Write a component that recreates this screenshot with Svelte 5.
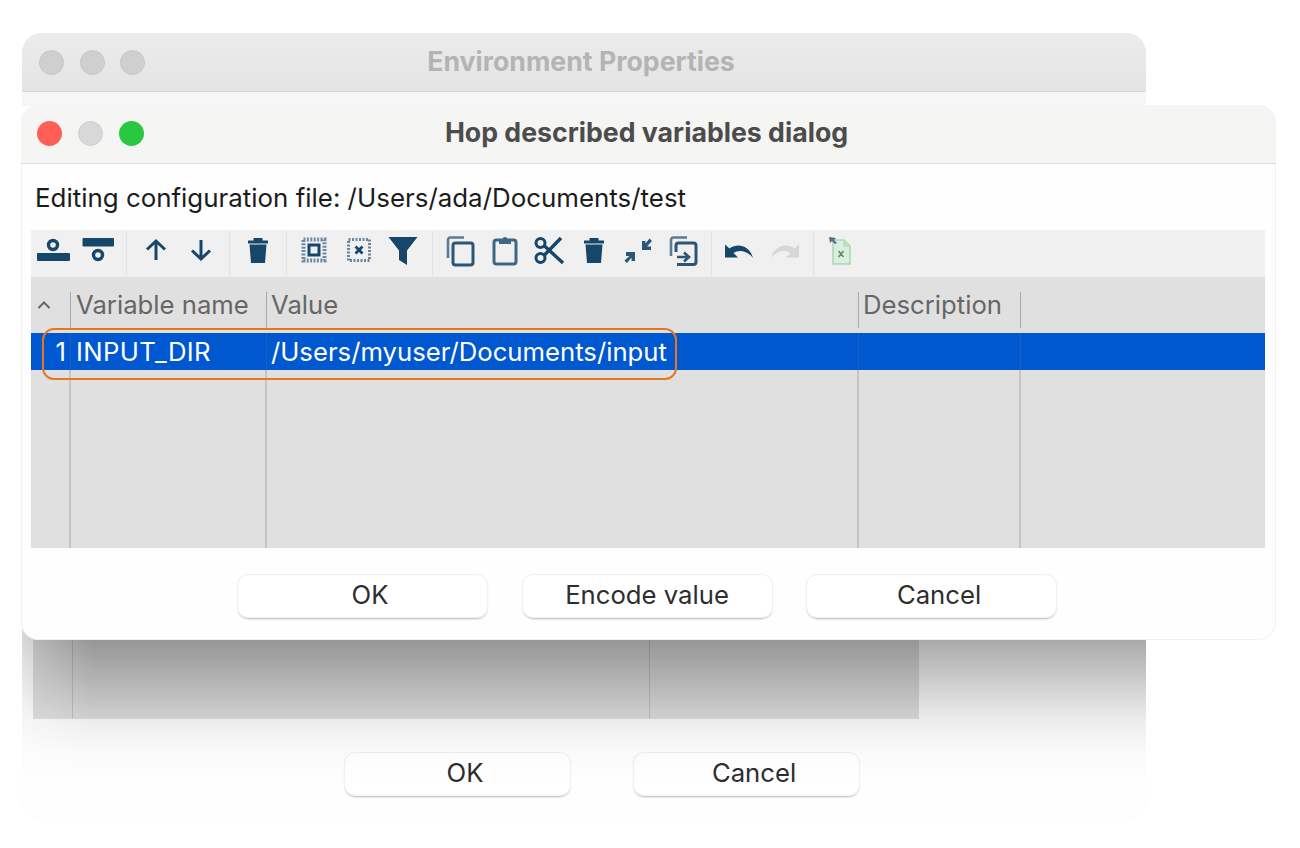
<script>
  const groups = [
    ['addAbove', 'addBelow'],
    ['up', 'down'],
    ['trash'],
    ['selAll', 'selNone', 'filter'],
    ['copy', 'paste', 'cut', 'trash', 'shrink', 'dup'],
    ['undo', 'redo'],
    ['excel']
  ];
</script>

{#snippet icon(name)}
  <svg class="ico" viewBox="0 0 34 34" width="34" height="34" aria-hidden="true">
    {#if name === 'addAbove'}
      <rect x="1" y="20" width="33" height="8" rx="1" fill="#17466b"/>
      <circle cx="17" cy="12" r="4.5" fill="none" stroke="#17466b" stroke-width="3.4"/>
    {:else if name === 'addBelow'}
      <rect x="1.5" y="5" width="31.5" height="8.5" rx="1" fill="#17466b"/>
      <circle cx="17" cy="22" r="4.5" fill="none" stroke="#17466b" stroke-width="3.4"/>
    {:else if name === 'up'}
      <path d="M17 27V9M8 16.5L17 8l9 8.5" fill="none" stroke="#17466b" stroke-width="3"/>
    {:else if name === 'down'}
      <path d="M17 7v18M8 17.5l9 8.5 9-8.5" fill="none" stroke="#17466b" stroke-width="3"/>
    {:else if name === 'trash'}
      <path d="M7 7.5h20v3H7zM12.5 5h9v3h-9zM8.5 11.5h17L24 30H10z" fill="#17466b"/>
    {:else if name === 'selAll'}
      <rect x="6.5" y="6.5" width="21" height="21" fill="none" stroke="#6f8aa0" stroke-width="4" stroke-dasharray="2 1.4"/>
      <rect x="12" y="12" width="10" height="10" fill="#eef0f1" stroke="#17466b" stroke-width="3"/>
    {:else if name === 'selNone'}
      <rect x="6.5" y="6.5" width="21" height="21" fill="none" stroke="#6c8499" stroke-width="3" stroke-dasharray="2 1.5"/>
      <path d="M13.5 13.5l7 7M20.5 13.5l-7 7" stroke="#17466b" stroke-width="2.8"/>
    {:else if name === 'filter'}
      <path d="M2.5 4h29L21 17.5V32l-8-5V17.5z" fill="#17466b"/>
    {:else if name === 'copy'}
      <path d="M21 4.5H7.5A2.5 2.5 0 0 0 5 7v18" fill="none" stroke="#5b7b94" stroke-width="2.6"/>
      <rect x="10" y="10" width="20" height="22" rx="2.5" fill="none" stroke="#2b5677" stroke-width="3"/>
    {:else if name === 'paste'}
      <rect x="6" y="7" width="22" height="24" rx="2.5" fill="none" stroke="#3f6683" stroke-width="3"/>
      <path d="M11 11V6.500h3.500a2.500 2.500 0 0 1 5 0H23V11z" fill="#3f6683"/>
    {:else if name === 'cut'}
      <circle cx="8.5" cy="10" r="4.5" fill="none" stroke="#17466b" stroke-width="3"/>
      <circle cx="8.5" cy="25" r="4.5" fill="none" stroke="#17466b" stroke-width="3"/>
      <path d="M12 12.500L31 30M12 22.500L29 5" fill="none" stroke="#17466b" stroke-width="3.400"/>
    {:else if name === 'shrink'}
      <path d="M21 8v9h9v-3.500h-4L31 8l-2.500-2.500-4 5V8z" fill="#2b5677"/>
      <path d="M14 19v9h-3.500v-3.500L6 30l-2.500-2.500 5-4.500H5v-4z" fill="#2b5677"/>
    {:else if name === 'dup'}
      <path d="M21 4.500H7.500A2.500 2.500 0 0 0 5 7v16" fill="none" stroke="#5b7b94" stroke-width="2.600"/>
      <path d="M10 19V12.500A2.500 2.500 0 0 1 12.500 10h15a2.500 2.500 0 0 1 2.500 2.500V29a2.500 2.500 0 0 1-2.500 2.500H11" fill="none" stroke="#2b5677" stroke-width="3"/>
      <path d="M11 24h11M18 19.500l5 4.500-5 4.500" fill="none" stroke="#2b5677" stroke-width="2.600"/>
    {:else if name === 'undo'}
      <path d="M2 11.500v13h13l-4.500-4.500C15 16.500 24 17 30 25 27 14 16 9 6.500 15.500z" fill="#17466b"/>
    {:else if name === 'redo'}
      <path d="M32 11.500v13H19l4.500-4.500C19 16.500 10 17 4 25 7 14 18 9 27.500 15.500z" fill="#d6d6d6"/>
    {:else if name === 'excel'}
      <path d="M9 7h11l6 6v18H9z" fill="#d9eedd" stroke="#a9d6b2" stroke-width="1.500"/>
      <path d="M20 7v6h6" fill="#bfe0c6" stroke="#a9d6b2" stroke-width="1"/>
      <path d="M14.500 18l5 6M19.500 18l-5 6" stroke="#5d8a68" stroke-width="1.500"/>
      <path d="M5 4l7 1-2 2 3 3-2 1-3-3-2 2z" fill="#4d6f8b"/>
    {/if}
  </svg>
{/snippet}

<main class="page">
  <section class="win back">
    <header class="titlebar">
      <div class="lights">
        <span class="dot off"></span>
        <span class="dot off"></span>
        <span class="dot off"></span>
      </div>
      <h2>Environment Properties</h2>
    </header>
    <div class="back-body">
      <div class="back-table">
        <span></span>
        <span></span>
      </div>
      <div class="actions back-actions">
        <button class="offset">OK</button>
        <button class="offset">Cancel</button>
      </div>
    </div>
    <div class="shade"></div>
  </section>

  <section class="win front">
    <header class="titlebar">
      <div class="lights">
        <span class="dot red"></span>
        <span class="dot grey"></span>
        <span class="dot green"></span>
      </div>
      <h2>Hop described variables dialog</h2>
    </header>

    <p class="path">Editing configuration file: /Users/ada/Documents/test</p>

    <div class="toolbar">
      {#each groups as group}
        <div class="group">
          {#each group as name}
            <span class="tool">{@render icon(name)}</span>
          {/each}
        </div>
      {/each}
    </div>

    <div class="table">
      <div class="thead">
        <div class="th sort">
          <svg viewBox="0 0 14 8" width="14" height="8" aria-hidden="true">
            <path d="M1.500 7L7 1.500 12.500 7" fill="none" stroke="#666" stroke-width="2"/>
          </svg>
        </div>
        <div class="th name"><span>Variable name</span></div>
        <div class="th"><span>Value</span></div>
        <div class="th"><span>Description</span></div>
        <div class="th"></div>
      </div>
      <div class="row selected">
        <div class="td num">1</div>
        <div class="td name wide">INPUT_DIR</div>
        <div class="td">/Users/myuser/Documents/input</div>
        <div class="td"></div>
        <div class="td"></div>
      </div>
      <div class="row filler">
        <div class="td"></div>
        <div class="td"></div>
        <div class="td"></div>
        <div class="td"></div>
        <div class="td"></div>
      </div>
    </div>

    <div class="actions front-actions">
      <button class="offset">OK</button>
      <button>Encode value</button>
      <button class="offset">Cancel</button>
    </div>

    <div class="highlight"></div>
  </section>
</main>

<style>
  :global(body) {
    background: #fff;
    font-family: Inter, "Liberation Sans", sans-serif;
  }
  .page {
    position: relative;
    width: 1300px;
    height: 848px;
    overflow: hidden;
    background: #fff;
  }
  .win {
    position: absolute;
    display: flex;
    flex-direction: column;
    box-sizing: border-box;
    overflow: hidden;
  }
  .back {
    left: 22px;
    top: 33px;
    width: 1124px;
    height: 787px;
    background: #fefefe;
    border-radius: 20px;
    box-shadow: inset 0 0 0 1px #f0f0f0;
  }
  .front {
    left: 21px;
    top: 105px;
    width: 1255px;
    height: 535px;
    background: #fefefe;
    border-radius: 18px;
    box-shadow: inset 0 0 0 1px #f1f1f1;
  }
  .titlebar {
    position: relative;
    display: flex;
    align-items: center;
    justify-content: center;
    flex: none;
    box-sizing: border-box;
    height: 59px;
    border-bottom: 1px solid #dcdcdc;
  }
  .back .titlebar {
    background: linear-gradient(#ececec, #e4e4e4);
    border-color: #d6d6d6;
  }
  .front .titlebar {
    background: #f5f5f4;
  }
  .titlebar h2 {
    margin: 0;
    font-size: 26.7px;
    font-weight: 700;
    color: #4c4c4c;
    white-space: nowrap;
    transform: translate(-2px, -2px);
  }
  .back .titlebar h2 {
    color: #b4b4b4;
    transform: translate(-3px, -1px);
  }
  .lights {
    position: absolute;
    left: 17px;
    top: 17px;
    display: flex;
    gap: 15.5px;
  }
  .front .lights {
    left: 16px;
    top: 16px;
    gap: 15.75px;
  }
  .dot {
    box-sizing: border-box;
    width: 25px;
    height: 25px;
    border-radius: 50%;
  }
  .off { background: #cfcfcf; border: 1px solid #c6c6c6; }
  .red { background: #ff5f57; }
  .grey { background: #d8d8d8; border: 1px solid #cfcfcf; }
  .green { background: #28c840; }

  .actions {
    display: flex;
    justify-content: center;
  }
  .back-body {
    flex: 1;
    display: flex;
    flex-direction: column;
    padding: 13px 0 0 11px;
    background: linear-gradient(#f6f6f6 14px, #fefefe 14px);
  }
  .back-table {
    display: grid;
    grid-template-columns: 40px 577px;
    width: 886px;
    height: 614px;
    background: #e0e0e0;
  }
  .back-table span {
    border-right: 1.5px solid #c4c4c4;
  }
  .back-actions {
    justify-content: flex-start;
    margin: 34px 0 0 312px;
    gap: 64px;
  }
  .back-actions button {
    width: 225px;
  }
  /* shadow the front dialog drops on the window behind it */
  .shade {
    position: absolute;
    left: 0;
    right: 0;
    top: 500px;
    height: 287px;
    pointer-events: none;
    background: linear-gradient(rgba(0, 0, 0, 0.33) 107px, rgba(0, 0, 0, 0.07) 186px, rgba(0, 0, 0, 0.015) 220px, rgba(0, 0, 0, 0) 250px);
    mask-image: linear-gradient(90deg, rgba(0, 0, 0, 0.45), #000 70px);
  }

  .path {
    margin: 0;
    padding: 19px 14px 0;
    height: 47px;
    box-sizing: border-box;
    font-size: 25.9px;
    line-height: 30px;
    color: #1c1c1c;
    white-space: nowrap;
  }
  .toolbar {
    display: flex;
    flex: none;
    width: 1234px;
    height: 47px;
    margin: 19px 0 0 10px;
    background: #f0f0f0;
  }
  .group {
    display: flex;
    align-items: flex-start;
    position: relative;
    margin-right: 12px;
  }
  .group:first-child {
    margin-right: 14px;
  }
  .group::after {
    content: "";
    position: absolute;
    right: -7px;
    top: 1px;
    height: 44px;
    width: 1px;
    background: #e2e2e2;
  }
  .group:last-child::after {
    display: none;
  }
  .tool {
    display: flex;
    justify-content: center;
    width: 44.6px;
    padding-top: 3px;
  }
  .table {
    width: 1234px;
    margin-left: 10px;
    height: 271px;
    display: flex;
    flex-direction: column;
    background: #e0e0e0;
    color: #666;
    font-size: 25.7px;
  }
  .thead, .row {
    display: grid;
    grid-template-columns: 40px 196px 592px 162px 1fr;
  }
  .thead {
    height: 56px;
  }
  .th {
    display: flex;
    align-items: center;
    box-sizing: border-box;
    height: 36px;
    margin-top: 15px;
    padding: 0 0 0 4px;
    border-right: 1.5px solid #a8a8a8;
    white-space: nowrap;
  }
  .th span {
    line-height: 26px;
    margin-top: -10px;
  }
  .th:last-child { border: none; }
  .sort { padding: 0 0 10px 6px; }
  .th.name { padding-left: 5px; }
  .row.selected {
    height: 37px;
    background: #0058d0;
    color: #fff;
  }
  .td {
    display: flex;
    align-items: center;
    box-sizing: border-box;
    padding-left: 4px;
    border-right: 1px solid rgba(120, 120, 120, 0.25);
    white-space: nowrap;
  }
  .td.name { padding-left: 5px; }
  .td.wide { letter-spacing: 0.4px; }
  .td:last-child { border: none; }
  .num { justify-content: flex-end; padding-right: 4px; }
  .row.filler {
    flex: 1;
  }
  .filler .td { border-right: 2px solid #c4c4c4; }
  .filler .td:last-child { border: none; }

  .front-actions {
    gap: 35.5px;
    margin-top: 27px;
    padding-right: 3px;
  }
  button {
    width: 249px;
    height: 42px;
    padding: 0 0 4px;
    background: #fff;
    border: none;
    border-radius: 10px;
    box-shadow: 0 0 0 1px #f1f1f1, 0 1.500px 2px rgba(0, 0, 0, 0.28);
    color: #2e2e2e;
    font: inherit;
    font-size: 25.7px;
  }
  button.offset {
    padding-left: 15px;
  }
  .highlight {
    position: absolute;
    left: 21px;
    top: 223px;
    width: 635px;
    height: 52px;
    box-sizing: border-box;
    border: 2.500px solid #e8761e;
    border-radius: 12px;
    pointer-events: none;
  }
</style>
